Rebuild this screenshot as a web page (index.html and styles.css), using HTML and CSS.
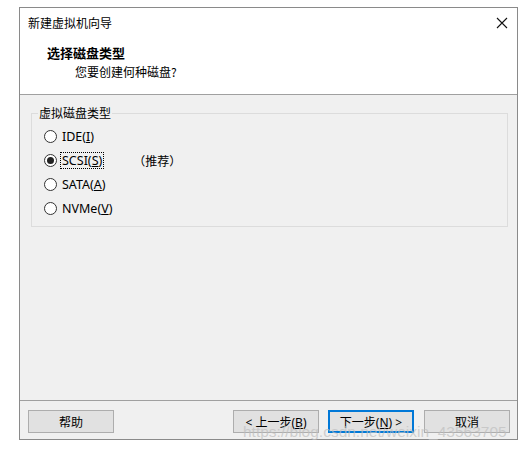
FILE: index.html
```html
<!DOCTYPE html>
<html lang="zh-CN">
<head>
    <meta charset="UTF-8">
    <title>新建虚拟机向导</title>
    <link rel="stylesheet" href="styles.css">
</head>
<body>
    <div class="window">
        <div class="header">
            <div class="titlebar">
                <span class="title">新建虚拟机向导</span>
                <svg class="close" width="12" height="12" viewBox="0 0 12 12">
                    <path d="M1 1 L11 11 M11 1 L1 11" stroke="#111" stroke-width="1.1" fill="none"/>
                </svg>
            </div>
            <div class="heading">选择磁盘类型</div>
            <div class="subheading">您要创建何种磁盘?</div>
        </div>

        <div class="content">
            <fieldset class="group">
                <legend>虚拟磁盘类型</legend>
                <div class="radio-row">
                    <span class="radio"></span>
                    <span class="label">IDE(<u>I</u>)</span>
                </div>
                <div class="radio-row">
                    <span class="radio checked"></span>
                    <span class="label focus">SCSI(<u>S</u>)</span>
                    <span class="hint">（推荐）</span>
                </div>
                <div class="radio-row">
                    <span class="radio"></span>
                    <span class="label">SATA(<u>A</u>)</span>
                </div>
                <div class="radio-row">
                    <span class="radio"></span>
                    <span class="label">NVMe(<u>V</u>)</span>
                </div>
            </fieldset>
        </div>

        <div class="footer">
            <button class="btn">帮助</button>
            <div class="spacer"></div>
            <button class="btn">&lt; 上一步(<u>B</u>)</button>
            <button class="btn default">下一步(<u>N</u>) &gt;</button>
            <button class="btn">取消</button>
        </div>

        <div class="watermark">https://blog.csdn.net/weixin_43563705</div>
    </div>
</body>
</html>
```

FILE: styles.css
```css
body {
    margin: 0;
    background: #fff;
    font-family: "Noto Sans", "Noto Sans CJK SC", sans-serif;
    font-size: 12px;
    color: #000;
}
.window {
    position: relative;
    margin: 7px 0 0 19px;
    width: 497px;
    height: 431px;
    border: 1px solid #8a8a8a;
    display: flex;
    flex-direction: column;
    background: #f0f0f0;
}
.header {
    background: #fff;
    height: 86px;
    border-bottom: 1px solid #a0a0a0;
}
.titlebar {
    display: flex;
    align-items: center;
    justify-content: space-between;
    height: 16px;
    padding: 7px 9px 0 8px;
    line-height: 16px;
}
.title {
    font-family: "Noto Sans CJK SC", sans-serif;
    font-size: 12px;
}
.close {
    display: block;
}
.heading {
    margin: 14px 0 0 27px;
    font-family: "Noto Sans CJK SC", sans-serif;
    font-weight: bold;
    font-size: 13px;
    line-height: 16px;
}
.subheading {
    margin: 3px 0 0 55px;
    font-family: "Noto Sans CJK SC", sans-serif;
    line-height: 16px;
}
.content {
    flex: 1;
    padding: 10px 9px 0 11px;
    border-bottom: 1px solid #a0a0a0;
}
.group {
    margin: 0;
    padding: 3px 0 6px 6px;
    border: 1px solid #dcdcdc;
}
.group legend {
    padding: 0 1px;
    font-family: "Noto Sans CJK SC", sans-serif;
    line-height: 16px;
}
.radio-row {
    display: flex;
    align-items: center;
    height: 24px;
    padding-left: 6px;
}
.radio {
    box-sizing: border-box;
    width: 13px;
    height: 13px;
    border: 1px solid #333;
    border-radius: 50%;
    background: #fff;
    position: relative;
    margin-right: 3px;
}
.radio.checked::after {
    content: "";
    position: absolute;
    left: 2px;
    top: 2px;
    width: 7px;
    height: 7px;
    border-radius: 50%;
    background: #222;
}
.label {
    padding: 0 1px;
    font-size: 12.5px;
    line-height: 15px;
    border: 1px dotted transparent;
}
.label.focus {
    border-color: #000;
}
.hint {
    margin-left: 29px;
    font-family: "Noto Sans CJK SC", sans-serif;
}
.footer {
    display: flex;
    align-items: flex-start;
    gap: 9px;
    height: 38px;
    padding: 9px 7px 0 8px;
    box-sizing: border-box;
}
.spacer {
    flex: 1;
}
.btn {
    width: 86px;
    height: 23px;
    margin: 0;
    padding: 0;
    border: 1px solid #adadad;
    background: #e1e1e1;
    font-family: "Noto Sans", "Noto Sans CJK SC", sans-serif;
    font-size: 12px;
    color: #000;
}
.btn.default {
    border: 2px solid #0078d7;
}
.btn:last-child {
    margin-left: 1px;
}
.watermark {
    position: absolute;
    left: 223px;
    bottom: -2px;
    font-family: "Liberation Sans", sans-serif;
    font-size: 15.5px;
    color: rgba(190, 190, 190, 0.7);
    white-space: nowrap;
    pointer-events: none;
}
```
